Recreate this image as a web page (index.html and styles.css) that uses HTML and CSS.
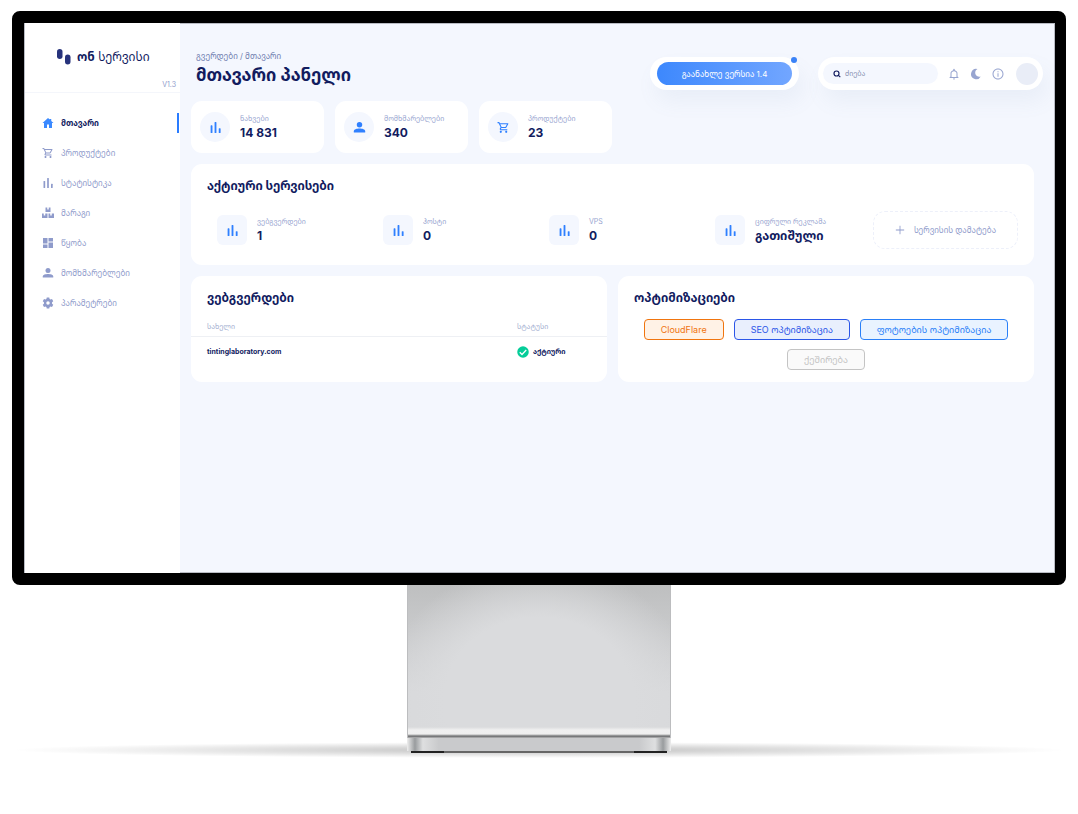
FILE: index.html
```html
<!DOCTYPE html>
<html lang="ka">
<head>
<meta charset="utf-8">
<meta name="viewport" content="width=device-width, initial-scale=1">
<title>ონ სერვისი</title>
<link rel="stylesheet" href="styles.css">
</head>
<body>
<svg class="sprite" aria-hidden="true">
  <symbol id="home" viewBox="0 0 24 24"><path d="M12 2 1 12H4v10h6v-7h4v7h6V12h3L18.500 7.900V4h-3v1.200z"/></symbol>
  <symbol id="cart" viewBox="0 0 24 24"><path d="M15.550 13c.75 0 1.410-.41 1.750-1.030l3.580-6.490A.996.996 0 0 0 20.010 4H5.210l-.94-2H1v2h2l3.600 7.590-1.350 2.440C4.520 15.370 5.480 17 7 17h12v-2H7l1.100-2h7.450zM6.160 6h12.150l-2.760 5H8.530L6.160 6zM7 18c-1.100 0-1.990.9-1.990 2S5.900 22 7 22s2-.9 2-2-.9-2-2-2zm10 0c-1.100 0-1.990.9-1.990 2s.89 2 1.990 2 2-.9 2-2-.9-2-2-2z"/></symbol>
  <symbol id="bars" viewBox="0 0 24 24"><rect x="3" y="8" width="3.400" height="14" rx="1"/><rect x="10.300" y="2" width="3.400" height="20" rx="1"/><rect x="18" y="13.500" width="3.400" height="8.500" rx="1"/></symbol>
  <symbol id="boxes" viewBox="0 0 24 24"><path d="M7 1h3.500v4h3V1H17v9H7zM0 13h3.500v4h3v-4H11v9H0zM13 13h3.500v4h3v-4H24v9H13z"/></symbol>
  <symbol id="grid" viewBox="0 0 24 24"><path d="M2 2h9v11H2zM13 2h9v7h-9zM13 11h9v11h-9zM2 15h9v7H2z"/></symbol>
  <symbol id="user" viewBox="0 0 24 24"><circle cx="12" cy="7" r="5"/><path d="M1.500 21v-2C1.500 15.500 7 14 12 14s10.500 1.500 10.500 5v2z"/></symbol>
  <symbol id="gear" viewBox="0 0 24 24"><path fill-rule="evenodd" d="M9.500 1h5l.7 3.200 1.700 1 3.100-1 2.500 4.300-2.400 2.200v2.600l2.400 2.200-2.500 4.300-3.100-1-1.700 1-.7 3.200h-5l-.7-3.200-1.700-1-3.100 1-2.500-4.300 2.400-2.200v-2.600L1.500 8.500 4 4.200l3.100 1 1.700-1zM12 8.500a3.500 3.500 0 1 0 0 7 3.500 3.500 0 0 0 0-7z"/></symbol>
  <symbol id="search" viewBox="0 0 24 24"><g fill="none" stroke="currentColor" stroke-width="3.500"><circle cx="10.500" cy="10.500" r="7.500"/><path d="m15.500 15.500 6.500 6"/></g></symbol>
  <symbol id="bell" viewBox="0 0 24 24"><path d="M12 23c1.100 0 2-.9 2-2h-4c0 1.100.9 2 2 2zm7-6v-6c0-3.070-2-5.640-5.500-6.320V3c0-.83-.67-1.500-1.500-1.500s-1.500.67-1.500 1.500v1.680C7 5.360 5 7.920 5 11v6l-2 2v1h18v-1l-2-2zm-2 1H7v-7c0-2.480 2-4.500 5-4.500s5 2.020 5 4.500v7z"/></symbol>
  <symbol id="moon" viewBox="0 0 24 24"><path d="M15 2C11 4 9.500 8.500 11 12.500c1.500 3.800 6 6 10.500 4.500A10.300 10.300 0 1 1 15 2z"/></symbol>
  <symbol id="info" viewBox="0 0 24 24"><path d="M11 6.500h2v2h-2zm0 4h2v7h-2zM12 1C5.900 1 1 5.900 1 12s4.900 11 11 11 11-4.900 11-11S18.100 1 12 1zm0 20c-5 0-9-4-9-9s4-9 9-9 9 4 9 9-4 9-9 9z"/></symbol>
  <symbol id="plus" viewBox="0 0 24 24"><path d="M11 2h2v9h9v2h-9v9h-2v-9H2v-2h9z"/></symbol>
  <symbol id="check" viewBox="0 0 24 24"><circle cx="12" cy="12" r="11.500"/><path d="m5.500 12.500 4.500 4.500 8.500-9" fill="none" stroke="#fff" stroke-width="2.500"/></symbol>
</svg>

<div class="scene">
  <div class="monitor">
    <aside class="sidebar">
      <div class="brand">
        <a class="logo" href="#">
          <svg class="logo-mark" viewBox="0 0 14 16"><rect x="0" y="0" width="5.500" height="10" rx="2.750"/><rect x="8" y="5.500" width="5.500" height="10" rx="2.750"/></svg>
          <span><b>ონ</b> სერვისი</span>
        </a>
        <span class="version">V1.3</span>
      </div>
      <nav class="nav">
        <a class="nav-link active" href="#"><svg class="icon"><use href="#home"/></svg>მთავარი</a>
        <a class="nav-link" href="#"><svg class="icon"><use href="#cart"/></svg>პროდუქტები</a>
        <a class="nav-link" href="#"><svg class="icon"><use href="#bars"/></svg>სტატისტიკა</a>
        <a class="nav-link" href="#"><svg class="icon"><use href="#boxes"/></svg>მარაგი</a>
        <a class="nav-link" href="#"><svg class="icon"><use href="#grid"/></svg>წყობა</a>
        <a class="nav-link" href="#"><svg class="icon"><use href="#user"/></svg>მომხმარებლები</a>
        <a class="nav-link" href="#"><svg class="icon"><use href="#gear"/></svg>პარამეტრები</a>
      </nav>
    </aside>

    <main class="main">
      <header class="header">
        <div class="heading">
          <div class="crumbs">გვერდები / მთავარი</div>
          <h1>მთავარი პანელი</h1>
        </div>
        <div class="pill update"><button class="update-btn" type="button">გაანახლე ვერსია 1.4</button><span class="dot"></span></div>
        <div class="pill tools">
          <label class="search"><svg class="icon"><use href="#search"/></svg><input type="search" placeholder="ძიება" aria-label="ძიება"></label>
          <button class="tool" type="button" aria-label="შეტყობინებები"><svg class="icon"><use href="#bell"/></svg></button>
          <button class="tool" type="button" aria-label="მუქი რეჟიმი"><svg class="icon"><use href="#moon"/></svg></button>
          <button class="tool" type="button" aria-label="ინფორმაცია"><svg class="icon"><use href="#info"/></svg></button>
          <button class="avatar" type="button" aria-label="პროფილი"></button>
        </div>
      </header>

      <div class="content">
        <section class="stats">
          <div class="card stat"><span class="badge round"><svg class="icon"><use href="#bars"/></svg></span><div><div class="label">ნახვები</div><div class="value">14 831</div></div></div>
          <div class="card stat"><span class="badge round"><svg class="icon"><use href="#user"/></svg></span><div><div class="label">მომხმარებლები</div><div class="value">340</div></div></div>
          <div class="card stat"><span class="badge round"><svg class="icon"><use href="#cart"/></svg></span><div><div class="label">პროდუქტები</div><div class="value">23</div></div></div>
        </section>

        <section class="card services">
          <h2>აქტიური სერვისები</h2>
          <div class="service-row">
            <div class="service"><span class="badge"><svg class="icon"><use href="#bars"/></svg></span><div><div class="label">ვებგვერდები</div><div class="value">1</div></div></div>
            <div class="service"><span class="badge"><svg class="icon"><use href="#bars"/></svg></span><div><div class="label">ჰოსტი</div><div class="value">0</div></div></div>
            <div class="service"><span class="badge"><svg class="icon"><use href="#bars"/></svg></span><div><div class="label">VPS</div><div class="value">0</div></div></div>
            <div class="service"><span class="badge"><svg class="icon"><use href="#bars"/></svg></span><div><div class="label">ციფრული რეკლამა</div><div class="value">გათიშული</div></div></div>
            <button class="add" type="button"><svg class="icon"><use href="#plus"/></svg>სერვისის დამატება</button>
          </div>
        </section>

        <div class="panels">
          <section class="card sites">
            <h2>ვებგვერდები</h2>
            <table>
              <thead><tr><th>სახელი</th><th class="status">სტატუსი</th></tr></thead>
              <tbody><tr><td>tintinglaboratory.com</td><td class="status"><span class="state"><svg class="icon"><use href="#check"/></svg>აქტიური</span></td></tr></tbody>
            </table>
          </section>
          <section class="card">
            <h2>ოპტიმიზაციები</h2>
            <div class="tags">
              <button class="tag orange" type="button">CloudFlare</button>
              <button class="tag indigo" type="button">SEO ოპტიმიზაცია</button>
              <button class="tag blue" type="button">ფოტოების ოპტიმიზაცია</button>
              <button class="tag gray" type="button" disabled>ქეშირება</button>
            </div>
          </section>
        </div>
      </div>
    </main>
  </div>

  <div class="stand-area">
    <div class="stand"><div class="neck"></div><div class="foot"></div><div class="pads"></div></div>
  </div>
</div>
</body>
</html>
```
FILE: styles.css
```css
* { box-sizing: border-box; }
body {
  margin: 0;
  background: #fff;
  color: #121c5f;
  font-family: Inter, "Noto Sans Georgian", "DejaVu Sans", sans-serif;
  font-size: 8px;
  line-height: 12px;
}
button, input { font: inherit; color: inherit; border: 0; padding: 0; background: none; }
a { color: inherit; text-decoration: none; }
h1, h2 { margin: 0; }
.sprite { position: absolute; width: 0; height: 0; }
.icon { width: 12px; height: 12px; flex: none; fill: currentColor; }

.scene { padding: 11px 12px; }
.monitor {
  display: flex;
  min-height: 574px;
  border: 12px solid #000;
  border-right-width: 11px;
  border-radius: 8px;
  box-shadow: inset 0 0 0 1px #b9bcc4;
  background: #f4f7fe;
}

.sidebar { width: 156px; flex: none; background: #fff; border-left: 1px solid #b9bcc4; }
.brand {
  display: flex;
  flex-direction: column;
  height: 70px;
  padding: 25px 4px 0 32px;
  border-bottom: 1px solid #f4f6fb;
}
.logo { display: flex; align-items: center; gap: 6px; font-size: 12px; line-height: 18px; white-space: nowrap; }
.logo-mark { width: 14px; height: 16px; fill: #27337c; }
.version { align-self: flex-end; margin-top: 13px; color: #8f9bcb; font-size: 7px; }
.nav { display: flex; flex-direction: column; gap: 10px; padding-top: 20px; }
.nav-link {
  display: flex;
  align-items: center;
  gap: 7px;
  height: 20px;
  margin-right: 1px;
  padding-left: 17px;
  color: #8f9bcb;
}
.nav-link.active { color: #121c5f; font-weight: 700; border-right: 2px solid #2a7cff; }
.nav-link.active .icon { color: #3a89ff; }

.main { flex: 1; min-width: 0; padding: 27px 12px 20px 11px; }
.header { display: flex; align-items: flex-start; padding-left: 5px; }
.heading { flex: 1; }
.crumbs { color: #707eb0; }
h1 { font-size: 17px; line-height: 26px; }
.pill {
  position: relative;
  display: flex;
  align-items: center;
  height: 33px;
  margin-top: 7px;
  padding: 5px 7px;
  border-radius: 17px;
  background: #fff;
  box-shadow: 5px 12px 20px rgba(112, 144, 176, 0.08);
}
.update { width: 149px; margin-right: 19px; }
.update-btn {
  width: 100%;
  height: 23px;
  border-radius: 12px;
  background: linear-gradient(90deg, #3d88fd, #72a6ff);
  color: #fff;
}
.dot { position: absolute; top: 0; right: 2px; width: 6px; height: 6px; border-radius: 50%; background: #3a82f7; }
.tools { width: 225px; gap: 10px; padding: 5px; }
.search {
  display: flex;
  flex: 1;
  align-items: center;
  gap: 4px;
  min-width: 0;
  height: 21px;
  padding: 0 10px;
  border-radius: 11px;
  background: #f4f7fe;
}
.search .icon { width: 8px; height: 8px; }
.search input { flex: 1; min-width: 0; outline: 0; font-size: 7px; }
.search input::placeholder { color: #8790b0; opacity: 1; }
.tool { display: flex; color: #98a5d0; }
.avatar { width: 22px; height: 22px; margin-left: 2px; border-radius: 50%; background: #e9edf7; }

.content { display: flex; flex-direction: column; gap: 11px; margin: 11px 9px 0 0; }
.card { border-radius: 11px; background: #fff; }
.stats { display: flex; gap: 11px; }
.stat { display: flex; align-items: center; gap: 10px; width: 133px; height: 52px; padding: 0 9px; }
.badge {
  display: flex;
  align-items: center;
  justify-content: center;
  width: 30px;
  height: 30px;
  flex: none;
  border-radius: 6px;
  background: #f4f7fe;
  color: #2f80ff;
}
.badge .icon { width: 13px; height: 13px; }
.round { border-radius: 50%; }
.label { color: #98a5d0; font-size: 7px; line-height: 12px; white-space: nowrap; }
.value { font-size: 12px; line-height: 16px; font-weight: 700; }

h2 { padding: 12px 16px 0; font-size: 12px; line-height: 20px; }
.services { padding-bottom: 16px; }
.service-row {
  display: grid;
  grid-template-columns: repeat(3, 1fr) 158px 145px;
  align-items: center;
  padding: 15px 16px 0 26px;
}
.service { display: flex; align-items: center; gap: 10px; }
.add {
  display: flex;
  align-items: center;
  justify-content: center;
  gap: 9px;
  height: 38px;
  border: 1px dashed #edf0fa;
  border-radius: 12px;
  color: #8f9bcb;
  white-space: nowrap;
}
.add .icon { width: 10px; height: 10px; }

.panels { display: grid; grid-template-columns: 1fr 1fr; gap: 11px; }
.panels .card { min-height: 106px; }
table { width: 100%; margin-top: 10px; border-collapse: collapse; table-layout: fixed; }
th { height: 18px; padding: 0 16px; border-bottom: 1px solid #eef0f4; color: #a3aed0; font-size: 7px; font-weight: 400; text-align: left; }
td { height: 32px; padding: 0 16px; font-size: 7px; font-weight: 700; }
.status { width: 90px; padding: 0; }
.state { display: flex; align-items: center; gap: 4px; }
.state .icon { color: #05cd99; }
.tags { display: flex; flex-wrap: wrap; justify-content: center; gap: 9px 10px; padding: 11px 8px 0; }
.tag { height: 21px; padding: 0 16px; border: 1px solid; border-radius: 4px; font-size: 9px; white-space: nowrap; }
.orange { background: #fff2e6; color: #f0750f; }
.indigo { background: #e9effd; color: #2b56e8; }
.blue { background: #e9f3ff; color: #2a80f8; }
.gray { background: #fafafa; color: #c4c4c4; }

.stand-area {
  display: flex;
  justify-content: center;
  background: radial-gradient(ellipse 50% 8px at 50% 165px, rgba(0, 0, 0, 0.25), transparent);
  padding-bottom: 10px;
}
.stand { width: 264px; }
.neck {
  height: 153px;
  border: solid #bcbdbf;
  border-width: 0 1px;
  background:
    linear-gradient(transparent 142px, #f0f0f0 145px, #efefef 149px, #77787a 151px, #77787a 152px, #d0d0d0),
    radial-gradient(ellipse 60% 90% at 50% 75%, #dadbdd 60%, transparent),
    linear-gradient(#bebfc0, #d8d9db 70%);
}
.foot { height: 13px; background: linear-gradient(90deg, #eee, #999c9e 3%, #dedfe0 6%, #c9cacc 12%, #c9cacc 88%, #dedfe0 94%, #999c9e 97%, #eee); }
.pads { height: 2px; margin: 0 4px; background: linear-gradient(90deg, #222 13%, #666 13%, #666 87%, #222 87%); }
```
